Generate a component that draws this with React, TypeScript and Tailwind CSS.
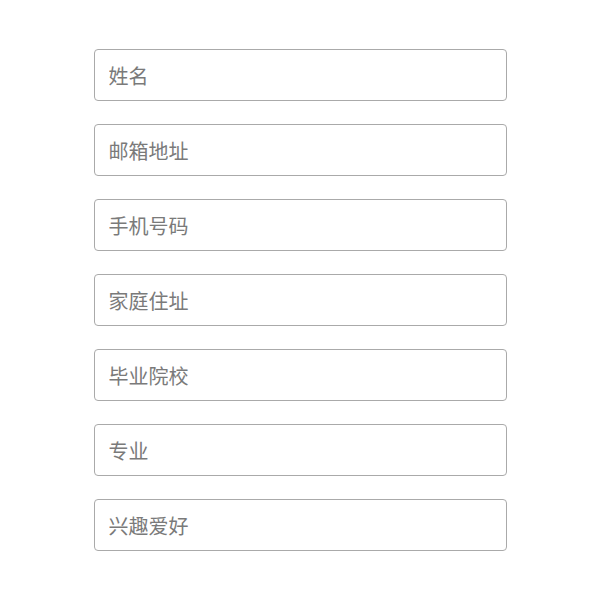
const fields = ['姓名', '邮箱地址', '手机号码', '家庭住址', '毕业院校', '专业', '兴趣爱好']

export default function App() {
  return (
    <div className="min-h-[600px] w-full bg-white pt-[49px]" style={{ fontFamily: '"Noto Sans CJK SC", "Noto Sans", sans-serif' }}>
      <form className="mx-auto flex w-[413px] flex-col gap-[23px]">
        {fields.map((f) => (
          <input
            key={f}
            type="text"
            placeholder={f}
            className="h-[52px] w-full rounded-[4px] border border-[#aaaaaa] bg-white px-[14px] text-[20px] text-[#555] outline-none placeholder:text-[#7a7a7a]"
          />
        ))}
      </form>
    </div>
  )
}
